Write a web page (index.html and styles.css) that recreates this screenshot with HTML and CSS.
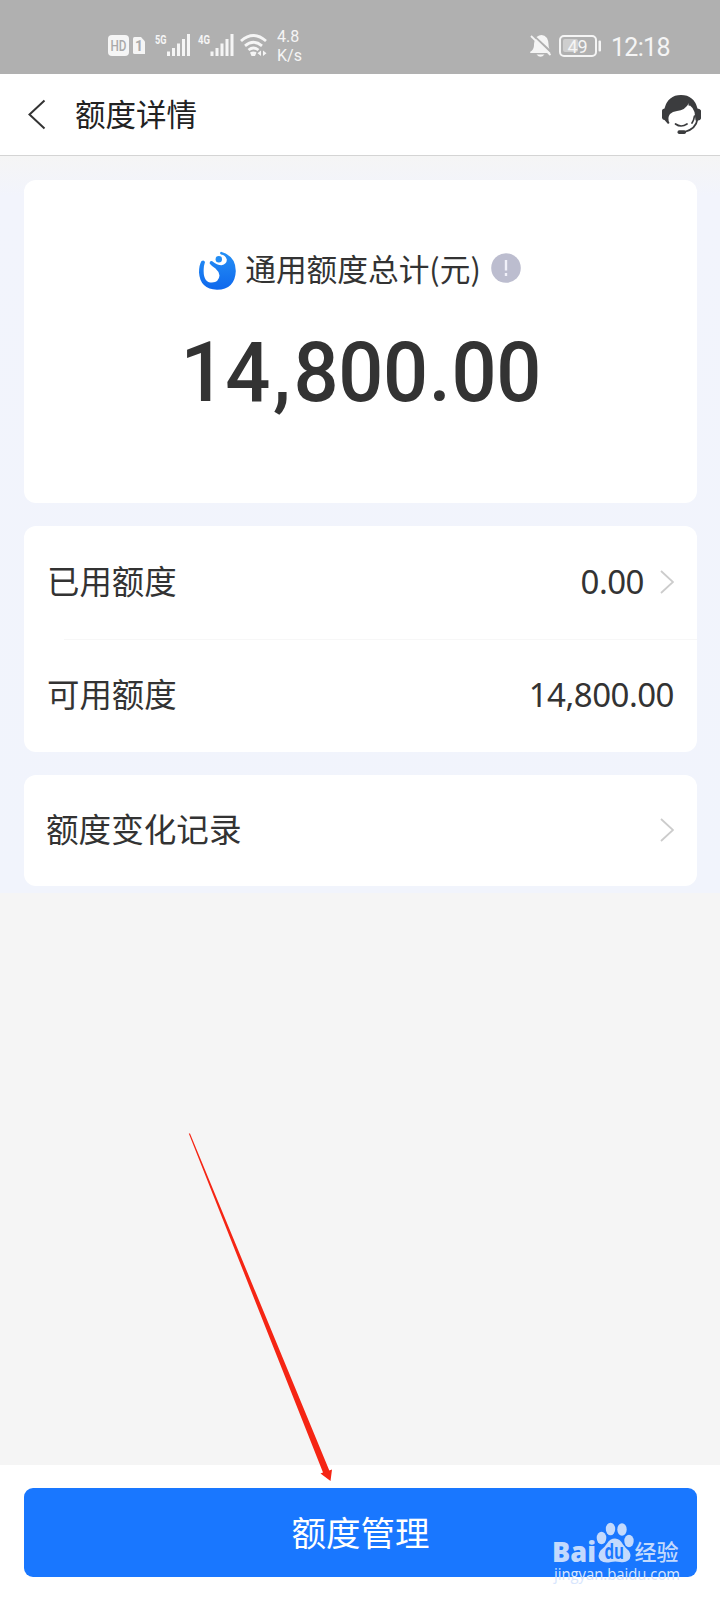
FILE: index.html
```html
<!DOCTYPE html>
<html lang="zh-CN">
<head>
<meta charset="utf-8">
<title>额度详情</title>
<link rel="stylesheet" href="styles.css">
</head>
<body>
<div class="screen">
  <div class="status">
    <svg class="status-left" width="160" height="28" viewBox="107 31 160 28" fill="#f5f5f5">
      <rect x="108" y="35" width="21" height="21" rx="4"/>
      <text class="hd" x="110.5" y="50.5" textLength="16" lengthAdjust="spacingAndGlyphs">HD</text>
      <path d="M134.500 37h6.500l4 4.500v12.500h-10.500q-1.500 0-1.500-1.500v-14q0-1.500 1.500-1.500z"/>
      <text class="sim" x="135" y="51">1</text>
      <text class="net" x="155" y="43.500" textLength="11.500" lengthAdjust="spacingAndGlyphs">5G</text>
      <path d="M167 51.500h3v4.500h-3zM172 48h3v8h-3zM177 43.500h3v12.500h-3zM182 39h3v17h-3zM187 34h3v22h-3z"/>
      <text class="net" x="198" y="43.500" textLength="12" lengthAdjust="spacingAndGlyphs">4G</text>
      <path d="M210.500 51.500h3v4.500h-3zM215.500 48h3v8h-3zM220.500 43.500h3v12.500h-3zM225.500 39h3v17h-3zM230.500 34h3v22h-3z"/>
      <g fill="none" stroke="#f5f5f5" stroke-width="2.800">
        <path d="M241 41q12.500-11 25 0"/><path d="M245 45.800q8.500-7 17 0"/><path d="M248.500 50q5-4 10 0"/>
      </g>
      <path d="M250 52.500q3.500-2 6.500 0l-1.500 3.500h-3.500zM261 50.500v5.500l-3.500-2.700zM263 50.500v5.500l3.500-2.700z"/>
    </svg>
    <div class="speed"><span>4.8</span><span>K/s</span></div>
    <svg class="status-right" width="74" height="26" viewBox="528 33 74 26" fill="#f5f5f5">
      <path d="M530 52q4-2 4-7 0-4.500 2-6l14.500 14h-20zM536.500 37q6-4.500 10.500 1 1.500 3 1.500 6 0 3 1 5zM536.500 54.500h8q-4 4.500-8 0z"/>
      <path d="M531 36l19.500 19" stroke="#f5f5f5" stroke-width="1.800"/>
      <rect x="563" y="39" width="15" height="13" rx="2" opacity=".45"/>
      <rect x="560" y="36" width="36" height="20" rx="4" fill="none" stroke="#f5f5f5" stroke-width="2"/>
      <rect x="598.500" y="40.500" width="2.500" height="11" rx="1"/>
      <text class="battery" x="567.500" y="52.500">49</text>
    </svg>
    <span class="clock">12:18</span>
  </div>
  <header class="nav">
    <svg class="back" width="20" height="32" viewBox="27 98 20 32" fill="none" stroke="#333" stroke-width="2"><path d="M44.500 100.500L29.500 114.500l15 14"/></svg>
    <h1>额度详情</h1>
    <svg class="service" width="40" height="40" viewBox="661 94 40 40">
      <path fill="#3b3c3e" d="M662 110.500q0-1.500 2.500-2 3.500-13.500 16.500-13.500t16.500 13.500q3 .5 3.500 2v8q-.5 2-3 2h-2.500q-.5-5-1-8.500-1.500-4.500-4.500-6.500-2.500 1-1-2.500-4 7.500-12 8-4.500.5-7 3-3 4-.5 9l-1.500 1-3.500-4q-2 0-2.500-2z"/>
      <path fill="none" stroke="#3b3c3e" stroke-width="1.700" stroke-linecap="round" d="M675.500 124q5.500 4 11.500 0M697.500 119q-1.500 10-13 13M694.500 116q-.5 4-2.500 7"/>
      <rect x="677.500" y="130.300" width="8.500" height="3.700" rx="1.700" fill="#3b3c3e"/>
    </svg>
  </header>
  <main class="body">
    <section class="card total">
      <div class="label">
        <svg class="brand" width="38" height="40" viewBox="198 252 38 40">
          <defs><linearGradient id="drop" x1="0" y1="0" x2="0" y2="1"><stop offset="0" stop-color="#2590f5"/><stop offset="1" stop-color="#0f68ed"/></linearGradient></defs>
          <path fill="url(#drop)" d="M221 252.800Q235.800 257 235.800 272 235 290.500 217 290.800 200 290 199 273.500 199 266 201.500 262q2.500-1.500 3.500 1-1.300 4-1.300 7Q203 283.500 212 283.500 219 283 219.500 276.500 219 272.500 215.500 269.500 212 267.500 209.800 264.800 209.200 261.500 212.300 262.200 217 266.300 221.500 266.300 227 265.300 226.800 260.500 225.500 256 221 255.600 219 254 221 252.800z"/>
          <circle cx="218.800" cy="260.300" r="3.200" fill="#238df4"/>
        </svg>
        <span>通用额度总计(元)</span>
        <svg class="info" width="30" height="30" viewBox="0 0 30 30"><circle cx="15" cy="15" r="14.800" fill="#bcbdcf"/><path d="M15 7v10.500M15 20v3" stroke="#f1f1fa" stroke-width="2.400"/></svg>
      </div>
      <div class="amount">14<i>,</i>800<i>.</i>00</div>
    </section>
    <section class="card usage">
      <div class="row"><span class="name">已用额度</span><span class="value">0.00</span><svg width="14" height="24" viewBox="0 0 14 24" fill="none" stroke="#ccc" stroke-width="1.800"><path d="M1 1l12 11L1 23"/></svg></div>
      <div class="row available"><span class="name">可用额度</span><span class="value">14,800.00</span></div>
    </section>
    <section class="card history">
      <div class="row"><span class="name">额度变化记录</span><svg class="end" width="14" height="24" viewBox="0 0 14 24" fill="none" stroke="#ccc" stroke-width="1.800"><path d="M1 1l12 11L1 23"/></svg></div>
    </section>
  </main>
  <footer class="footer"><button class="manage">额度管理</button></footer>
  <svg class="pointer" width="146" height="350" viewBox="188 1132 146 350"><path fill="#f52514" d="M188.800 1133.500h1.200L329.300 1470.500l2.700-1-1.500 11.500-10-7.500 2.500-1z"/></svg>
  <svg class="watermark" width="140" height="68" viewBox="550 1520 140 68">
    <g fill="#c3dafd">
      <text class="bai" x="552" y="1562" textLength="44" lengthAdjust="spacingAndGlyphs">Bai</text>
      <ellipse cx="601.500" cy="1538" rx="4.800" ry="6.200"/><ellipse cx="610.500" cy="1529" rx="4.700" ry="6.300"/><ellipse cx="622" cy="1529.500" rx="4.700" ry="6.200"/><ellipse cx="629" cy="1541" rx="4.700" ry="6.200"/>
      <path d="M615 1538.500q5 0 8 6 3 4 6 6.500 3.500 6-1 9.500-3 2.500-8 1.500-5-1-9 0-7 1.500-10.500-1.500-4-4 0-10 4-3 6.500-7 3-5 8-5z"/>
      <text class="jy" x="634.500" y="1560" textLength="44" lengthAdjust="spacingAndGlyphs">经验</text>
    </g>
    <text class="du" x="604.500" y="1559" textLength="19.500" lengthAdjust="spacingAndGlyphs">du</text>
    <text class="url" x="554" y="1579.500" textLength="126" lengthAdjust="spacingAndGlyphs">jingyan.baidu.com</text>
  </svg>
</div>
</body>
</html>
```
FILE: styles.css
```css
* { box-sizing: border-box; }
body { margin: 0; font-family: "Noto Sans CJK SC", sans-serif; color: #333; }
.screen { position: relative; width: 720px; height: 1600px; display: flex; flex-direction: column; background: #f5f5f5; overflow: hidden; }
.status { height: 74px; flex: none; background: #b0b0b0; color: #f5f5f5; padding: 31px 0 0 107px; display: flex; align-items: flex-start; font-family: Roboto, sans-serif; }
.status svg { flex: none; }
.speed { margin-left: 10px; width: 251px; display: flex; flex-direction: column; font-size: 16px; line-height: 19px; margin-top: -4px; }
.status-right { margin-top: 2px; }
.clock { margin-left: 9px; font-size: 25px; line-height: 33px; letter-spacing: -.7px; }
.hd { font: 500 14px Roboto, sans-serif; fill: #aaa; }
.sim { font: 700 14px Roboto, sans-serif; fill: #aaa; }
.net { font: 700 12.500px Roboto, sans-serif; }
.battery { font: 400 18px Roboto, sans-serif; }
.nav { height: 82px; flex: none; background: #fff; border-bottom: 1px solid #d4d4d4; display: flex; align-items: center; padding: 0 19px 1px 27px; }
.nav h1 { margin: 0 auto 0 28px; padding-bottom: 2px; font-size: 30.500px; line-height: 44px; font-weight: 400; color: #222; }
.body { height: 737px; flex: none; padding: 24px 23px 0 24px; display: flex; flex-direction: column; gap: 23px; background: linear-gradient(#f5f5f5, #f2f4fc 40px, #f1f4fc); }
.card { background: #fff; border-radius: 12px; flex: none; }
.total { height: 323px; padding-top: 68px; display: flex; flex-direction: column; align-items: center; }
.label { display: flex; align-items: center; gap: 9px; height: 44px; font-size: 30.700px; }
.label span { padding-bottom: 5px; }
.brand { margin-top: 2px; }
.info { margin: -4px 2px 0 1px; }
.amount { margin-top: 31px; font: 500 84px/100px Roboto, sans-serif; letter-spacing: -.400px; white-space: nowrap; transform: scaleX(.945); }
.amount i { display: inline-block; width: 25px; font-style: normal; text-align: center; }
.usage { height: 226px; }
.history { height: 111px; }
.row { height: 113px; padding: 0 23px 0 23px; display: flex; align-items: center; font-size: 32.400px; }
.name { padding-bottom: 7px; }
.row svg { margin-bottom: 2px; }
.history .row { height: 111px; font-size: 32.600px; padding-left: 22px; }
.value { margin-left: auto; margin-right: 16px; padding-bottom: 1px; font: 400 33px/44px "Noto Sans", sans-serif; letter-spacing: -.5px; }
.available { position: relative; }
.available::before { content: ""; position: absolute; left: 40px; right: 0; top: 0; height: 1px; background: #f7f7f7; }
.available .value { margin-right: 0; }
.end { margin-left: auto; }
.footer { flex: 1; margin-top: auto; max-height: 135px; background: #fff; padding: 23px 23px 0 24px; }
.manage { display: block; width: 100%; height: 89px; padding: 0 0 2px; border: 0; border-radius: 9px; background: #1977ff; color: #fff; font: 400 34.500px/87px "Noto Sans CJK SC", sans-serif; }
.pointer { position: absolute; left: 188px; top: 1132px; }
.watermark { position: absolute; left: 550px; top: 1520px; }
.bai { font: 800 29px "Open Sans", sans-serif; }
.du { font: 700 21px "Open Sans", sans-serif; fill: #1977ff; }
.jy { font: 500 22px "Noto Sans CJK SC", sans-serif; }
.url { font: 400 16px "Open Sans", sans-serif; fill: #d8e6fd; }
```
